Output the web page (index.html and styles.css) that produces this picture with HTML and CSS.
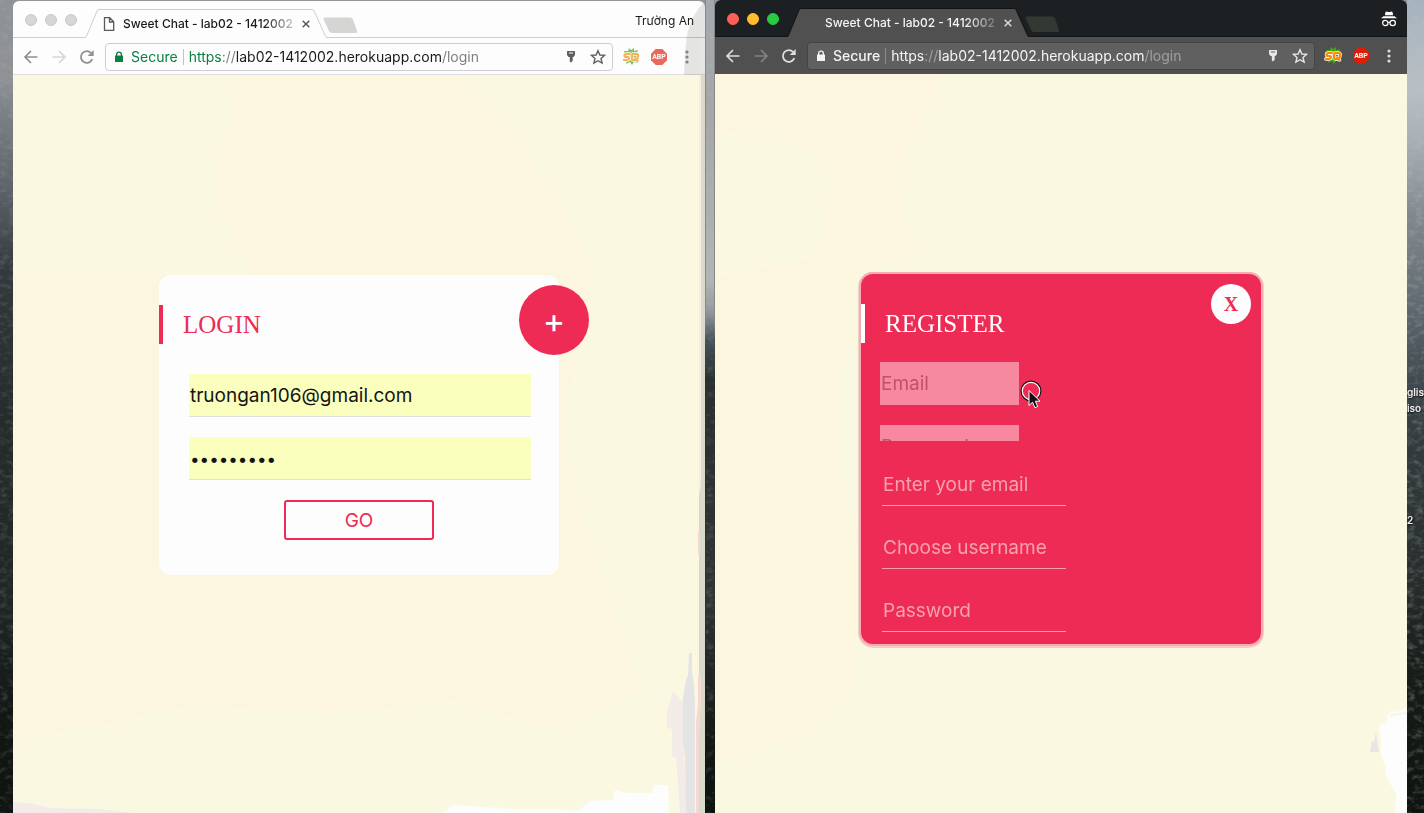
FILE: index.html
```html
<!DOCTYPE html>
<html lang="en">
<head>
<meta charset="utf-8">
<title>Sweet Chat - lab02 - 1412002</title>
<link rel="stylesheet" href="styles.css">
</head>
<body>
<svg class="defs" width="0" height="0" aria-hidden="true">
  <defs>
    <filter id="forest" x="0" y="0" width="100%" height="100%">
      <feTurbulence type="fractalNoise" baseFrequency="0.12 0.2" numOctaves="3" seed="4"/>
      <feColorMatrix values="0 0 0 0 0.5  0 0 0 0 0.55  0 0 0 0 0.58  1.6 0 0 0 -0.75"/>
    </filter>
    <symbol id="back" viewBox="0 0 16 16"><path d="M14.5 8H2M8 2L2 8l6 6" fill="none" stroke="currentColor" stroke-width="1.7"/></symbol>
    <symbol id="forward" viewBox="0 0 16 16"><path d="M1.500 8H14M8 2l6 6-6 6" fill="none" stroke="currentColor" stroke-width="1.7"/></symbol>
    <symbol id="reload" viewBox="0 0 16 16"><path d="M13.300 10.200A5.900 5.900 0 1 1 12.200 4" fill="none" stroke="currentColor" stroke-width="1.800"/><path d="M14.700 1v6H8.700z" fill="currentColor"/></symbol>
    <symbol id="lock" viewBox="0 0 10 12"><path d="M2.600 5V3.500a2.400 2.400 0 0 1 4.800 0V5" fill="none" stroke="currentColor" stroke-width="1.300"/><rect x="1" y="4.500" width="8" height="6.500" rx=".6" fill="currentColor"/></symbol>
    <symbol id="key" viewBox="0 0 10 14"><path d="M1.500 1h7q.5 0 .5.500v3.500L7.500 7H6.700v3.800L5 12.500 3.800 11.600V7H2.500L1 5V1.500q0-.5.5-.5z" fill="currentColor"/><path d="M3 3h4" stroke="var(--field)" stroke-width="1.200"/></symbol>
    <symbol id="star" viewBox="0 0 16 16"><path d="M8 1.700l1.900 4.300 4.600.4-3.500 3.100 1.100 4.600L8 11.700l-4.100 2.400L5 9.500 1.500 6.400l4.600-.4z" fill="none" stroke="currentColor" stroke-width="1.400"/></symbol>
    <symbol id="dots" viewBox="0 0 4 14"><circle cx="2" cy="2" r="1.600" fill="currentColor"/><circle cx="2" cy="7" r="1.600" fill="currentColor"/><circle cx="2" cy="12" r="1.600" fill="currentColor"/></symbol>
    <symbol id="cross" viewBox="0 0 8 8"><path d="M.7.7l6.600 6.600M7.300.7L.7 7.300" stroke="currentColor" stroke-width="1.400"/></symbol>
    <symbol id="tab" viewBox="0 0 242 29"><path class="tab-fill" d="M0 29q1-.5 1.500-1.500L12 2q.6-1.500 2-1.500h213q1.500 0 2.200 1.500L240.500 27.500q.5 1 1.500 1.500z"/><path class="tab-line" d="M0 28.500q1-.2 1.500-1.200L12 2q.6-1.500 2-1.500h213q1.500 0 2.200 1.500L240.500 27.300q.5 1 1.500 1.200"/></symbol>
    <symbol id="newtab" viewBox="0 0 34 17"><path d="M2 .5h25q2 0 3 2l4 11.500q.4 2-1.500 2H9q-2 0-3-2L.7 2.500Q.3.500 2 .5z" fill="currentColor"/></symbol>
    <symbol id="sq" viewBox="0 0 18 18"><path d="M2 3l4 0 1-3 2 2 3-2 0 3 4-1-1 3 2 3-1 3 0 4-4-1-2 3-2-3-4 2 1-4-4 0 2-4z" fill="#3fa712"/><g fill="none" stroke-linecap="round" stroke-linejoin="round"><g stroke="#fff" stroke-width="3.500"><path d="M8 6H4.500q-2 0-2 1.500t2 1.500h1q1.800 0 1.300 1.700Q6.500 12 5 12H1.800"/><path d="M11 6h3.500q2 0 1.600 2l-.4 2q-.4 2-2.200 2h-2q-2 0-1.600-2l.4-2Q9.700 6 11 6zM13 11l2.500 2"/></g><g stroke="#fc8704" stroke-width="2.200"><path d="M8 6H4.500q-2 0-2 1.500t2 1.500h1q1.800 0 1.300 1.700Q6.500 12 5 12H1.800"/><path d="M11 6h3.500q2 0 1.600 2l-.4 2q-.4 2-2.200 2h-2q-2 0-1.600-2l.4-2Q9.700 6 11 6zM13 11l2.500 2"/></g></g></symbol>
    <symbol id="octagon" viewBox="0 0 16 16"><path d="M4.700 0h6.600L16 4.700v6.600L11.300 16H4.700L0 11.300V4.700z" fill="#e11b04"/></symbol>
  </defs>
</svg>

<main class="desktop">
  <div class="wallpaper wallpaper-left"><svg class="grain" aria-hidden="true"><rect width="100%" height="100%" filter="url(#forest)"/></svg></div>

  <section class="window light" aria-label="Browser window, login">
    <header class="strip">
      <div class="lights"><button aria-label="Close window"></button><button aria-label="Minimize window"></button><button aria-label="Zoom window"></button></div>
      <div class="tab">
        <svg class="tab-shape" aria-hidden="true"><use href="#tab"/></svg>
        <svg class="favicon" viewBox="0 0 12 14" aria-hidden="true"><path d="M1.500.7h5.200l4 4v8.600H1.500zM6.500.7V5h4.200" fill="none" stroke="#5a5a5a" stroke-width="1.300"/></svg>
        <span class="tab-title">Sweet Chat - lab02 - 1412002</span>
        <button class="tab-close" aria-label="Close tab"><svg width="8" height="8"><use href="#cross"/></svg></button>
      </div>
      <button class="new-tab" aria-label="New tab"><svg width="34" height="17"><use href="#newtab"/></svg></button>
      <span class="profile">Trường An</span>
    </header>
    <nav class="toolbar">
      <button class="tool" aria-label="Back"><svg width="16" height="16"><use href="#back"/></svg></button>
      <button class="tool faint" aria-label="Forward"><svg width="16" height="16"><use href="#forward"/></svg></button>
      <button class="tool" aria-label="Reload"><svg width="16" height="16"><use href="#reload"/></svg></button>
      <div class="address">
        <svg class="lock" width="10" height="12"><use href="#lock"/></svg>
        <span class="secure">Secure</span>
        <span class="url"><span class="scheme">https</span><span class="dim">://</span>lab02-1412002.herokuapp.com<span class="dim">/login</span></span>
        <button class="mini" aria-label="Saved passwords"><svg width="10" height="14"><use href="#key"/></svg></button>
        <button class="mini" aria-label="Bookmark"><svg width="16" height="16"><use href="#star"/></svg></button>
      </div>
      <button class="tool ext" aria-label="SQ"><svg width="18" height="18"><use href="#sq"/></svg></button>
      <button class="tool ext abp"><svg width="16" height="16" aria-hidden="true"><use href="#octagon"/></svg><span>ABP</span></button>
      <button class="tool" aria-label="Menu"><svg width="4" height="14"><use href="#dots"/></svg></button>
    </nav>
    <svg class="corner" width="22" height="74" viewBox="0 0 22 74" aria-hidden="true"><path d="M22 0Q8 14 4 34L2 50 1 74h21z" fill="#e6e6e5"/><path d="M22 26l-5 10v38h5z" fill="#e8e8e8"/></svg>
    <div class="page">
      <svg class="scenery" width="692" height="738" viewBox="0 0 692 738" aria-hidden="true">
        <path d="M0 0h225l-25 120 40 80H0zM450 0h242v738H0V665l90-15 90-20 140 10 120-15 100 30 90-40-30-80-30-90-20-90 30-160-40-80z" fill="#fbf8e1"/>
        <path d="M686 0h6v738h-6V220z" fill="#f9ebda"/><path d="M688 0h4v738h-6V420l2-10z" fill="#d9d9cc"/>
        <path d="M685 455h2v24h-2zM685 600h3v30l-2 40v68h-3v-90l2-20z" fill="#f5d8cf"/>
        <path d="M660 617l4 3 6 8 1 54 3 56h-7l-2-30-2-26h-4v-28l-5-1v-16z" fill="#f3ebe8"/>
        <path d="M676 578h3v20l2 10 1 24v106h-9l-1-56-2-14v-46l3-17 2-5z" fill="#e4e4e5"/>
        <path d="M430 738l10-8 60 4 67 1 10-9 23-1 2-10 12 3h26v-8h15l1 28z" fill="#fdfdfd"/>
        <path d="M0 727l15 1 22 5 50 1 35 4H0z" fill="#f3ebe8"/>
      </svg>
      <div class="card login">
        <h1 class="title">LOGIN</h1>
        <button class="plus" aria-label="Register">+</button>
        <form class="login-form">
          <input class="filled" type="email" aria-label="Email" value="truongan106@gmail.com">
          <input class="filled secret" type="password" aria-label="Password" value="secret123">
          <button class="go" type="button">GO</button>
        </form>
      </div>
    </div>
  </section>

  <div class="wallpaper wallpaper-gap"><svg class="grain" aria-hidden="true"><rect width="100%" height="100%" filter="url(#forest)"/></svg></div>

  <section class="window dark" aria-label="Browser window, register">
    <header class="strip">
      <div class="lights"><button class="red" aria-label="Close window"></button><button class="amber" aria-label="Minimize window"></button><button class="green" aria-label="Zoom window"></button></div>
      <div class="tab">
        <svg class="tab-shape" aria-hidden="true"><use href="#tab"/></svg>
        <span class="favicon"></span>
        <span class="tab-title">Sweet Chat - lab02 - 1412002</span>
        <button class="tab-close" aria-label="Close tab"><svg width="8" height="8"><use href="#cross"/></svg></button>
      </div>
      <button class="new-tab" aria-label="New tab"><svg width="34" height="17"><use href="#newtab"/></svg></button>
      <svg class="incognito" width="16" height="16" viewBox="0 0 16 16" aria-label="Incognito"><path d="M4.500 1q1.500-.8 2.500 0h2q1-.8 2.500 0l.6 3.200H3.900zM2.500 5.300h11L16 7.300H0z" fill="#fff"/><circle cx="4.300" cy="12" r="2.700" fill="none" stroke="#fff" stroke-width="1.200"/><circle cx="11.700" cy="12" r="2.700" fill="none" stroke="#fff" stroke-width="1.200"/><path d="M7 11.500q1-.8 2 0" fill="none" stroke="#fff"/></svg>
    </header>
    <nav class="toolbar">
      <button class="tool" aria-label="Back"><svg width="16" height="16"><use href="#back"/></svg></button>
      <button class="tool faint" aria-label="Forward"><svg width="16" height="16"><use href="#forward"/></svg></button>
      <button class="tool" aria-label="Reload"><svg width="16" height="16"><use href="#reload"/></svg></button>
      <div class="address">
        <svg class="lock" width="10" height="12"><use href="#lock"/></svg>
        <span class="secure">Secure</span>
        <span class="url"><span class="scheme">https</span><span class="dim">://</span>lab02-1412002.herokuapp.com<span class="dim">/login</span></span>
        <button class="mini" aria-label="Saved passwords"><svg width="10" height="14"><use href="#key"/></svg></button>
        <button class="mini" aria-label="Bookmark"><svg width="16" height="16"><use href="#star"/></svg></button>
      </div>
      <button class="tool" aria-label="SQ"><svg width="18" height="18"><use href="#sq"/></svg></button>
      <button class="tool abp"><svg width="16" height="16" aria-hidden="true"><use href="#octagon"/></svg><span>ABP</span></button>
      <button class="tool" aria-label="Menu"><svg width="4" height="14"><use href="#dots"/></svg></button>
    </nav>
    <div class="page">
      <svg class="scenery" width="692" height="739" viewBox="0 0 692 739" aria-hidden="true">
        <path d="M230 0h462v739H0V690l90-30 50-50V480l-20-120 20-160 60-20-20-80zM0 60l60-6 60 40-20 90-100 20z" fill="#fbf8e1"/>
        <path d="M692 633l-10 5-8-1 1 6 17-3v99h-12l1-20-9-14-2-14-4-10v-15l-2-14 8-4 1-8 19-2z" fill="#fdfdfd"/>
        <path d="M661 658l2 14 1 6h-9l2-12 2 2z" fill="#e9e5e6"/>
      </svg>
      <div class="card register">
        <h1 class="title">REGISTER</h1>
        <button class="close" aria-label="Close">X</button>
        <div class="folding">
          <input type="email" aria-label="Login email" placeholder="Email">
          <input type="password" aria-label="Login password" placeholder="Password">
        </div>
        <form class="register-form">
          <input type="email" aria-label="Email" placeholder="Enter your email">
          <input type="text" aria-label="Username" placeholder="Choose username">
          <input type="password" aria-label="Password" placeholder="Password">
        </form>
        <svg class="pointer" width="24" height="30" viewBox="0 0 24 30" aria-hidden="true"><circle cx="11" cy="11" r="9.700" fill="none" stroke="#111" stroke-width="1.500"/><circle cx="11" cy="11" r="8.700" fill="none" stroke="#fff" stroke-width="1.200"/><path d="M9 10.500v15l3.500-3.300 2.400 5.500 2.800-1.200-2.400-5.300h4.700z" fill="#111" stroke="#fff"/></svg>
      </div>
    </div>
  </section>

  <aside class="wallpaper wallpaper-right">
    <svg class="grain" aria-hidden="true"><rect width="100%" height="100%" filter="url(#forest)"/></svg>
    <p class="icon-name first"><span>glis</span><span>iso</span></p>
    <p class="icon-name second">2</p>
  </aside>
</main>
</body>
</html>
```

FILE: styles.css
```css
* { box-sizing: border-box; }

body {
  margin: 0;
  font-family: Inter, "Liberation Sans", sans-serif;
}

button {
  margin: 0;
  padding: 0;
  border: 0;
  background: none;
  color: inherit;
  font: inherit;
}

svg { display: block; flex: none; }
.defs { position: absolute; }

.desktop {
  display: grid;
  grid-template-columns: 13px 1fr 10px 1fr 17px;
  min-height: 100vh;
  overflow: hidden;
  background: #929699;
}

/* Wallpaper seen between the windows */
.wallpaper { position: relative; overflow: hidden; }
.grain { position: absolute; inset: 0; width: 100%; height: 100%; opacity: .5; }
.wallpaper-left { background: linear-gradient(#8d9397, #8d9194 80px, #777d81 120px, #5c6267 190px, #33393c 270px, #252c2c 420px, #202725 600px, #121714 720px, #0f1411); }
.wallpaper-gap { background: linear-gradient(#a2aaaf, #a5a5a7 100px, #b2b4b5 280px, #969a9e 310px, #46525a 340px, #29302f 380px, #2f3433 600px, #121714 750px, #0d130f); border: solid #888; border-width: 0 1px; border-image: linear-gradient(#888, #888 300px, transparent 340px) 1; }
.wallpaper-right { background: linear-gradient(#a6b3bd, #b9bfc4 90px, #a8b0b5 140px, #80878c 220px, #636c72 300px, #414a4f 380px, #343b3d 440px, #2a302f 560px, #171c18 680px, #0e130f); }
.wallpaper-gap .grain, .wallpaper-left .grain { opacity: .3; }

.icon-name {
  position: relative;
  display: flex;
  flex-direction: column;
  margin: 0;
  color: #f0f0f0;
  font-size: 10px;
  font-weight: 600;
  line-height: 16px;
  text-shadow: 0 1px 2px #000;
}
.icon-name.first { padding-top: 384px; }
.icon-name.second { padding-top: 96px; }

/* Browser window */
.window {
  --chrome: #fdfdfd;
  --strip: #fdfdfd;
  --line: #cdcdcd;
  --field: #fdfdfd;
  --icon: #8f8f8f;
  --text: #1a1a1a;
  position: relative;
  display: flex;
  flex-direction: column;
  min-width: 0;
  border-radius: 6px 6px 0 0;
  overflow: hidden;
}
.light { margin-top: 1px; }
.dark {
  --chrome: #505050;
  --strip: #1d2023;
  --line: #111315;
  --field: #606060;
  --icon: #dedede;
  --text: #f4f4f4;
}

.strip {
  display: flex;
  height: 37px;
  padding: 0 11px 0 12px;
  background: var(--strip);
  box-shadow: inset 0 -1px var(--line);
  color: var(--text);
}
.lights { display: flex; gap: 8px; width: 60px; padding-top: 13px; }
.lights button { width: 12px; height: 12px; border-radius: 50%; background: #d6d6d4; border: 1px solid #c8c8c6; }
.lights .red { background: #ff5f57; border-color: #ff5f57; }
.lights .amber { background: #ffbd2e; border-color: #ffbd2e; }
.lights .green { background: #28cb41; border-color: #28cb41; }

.tab {
  position: relative;
  display: flex;
  align-items: center;
  width: 242px;
  height: 29px;
  margin-top: 8px;
  padding-left: 18px;
}
.tab-shape { position: absolute; inset: 0; width: 242px; height: 29px; }
.tab-fill { fill: var(--chrome); }
.tab-line { fill: none; stroke: var(--line); }
.favicon { position: relative; width: 12px; height: 14px; margin-right: 8px; }
.tab-title {
  position: relative;
  width: 176px;
  overflow: hidden;
  font-size: 12px;
  font-weight: 500;
  line-height: 16px;
  white-space: nowrap;
  mask-image: linear-gradient(90deg, #000 140px, transparent 180px);
}
.tab-close { position: relative; margin-left: 3px; color: var(--icon); }
.light .tab-close { color: #555; }
.new-tab { height: 17px; margin: 16px 0 0 -4px; color: #d5d5d3; }
.dark .new-tab { color: #343832; }
.profile { margin: 12px 0 0 auto; font-size: 12px; line-height: 16px; }
.incognito { margin: 11px 0 0 auto; }
.dark .strip { padding-right: 10px; }

.toolbar {
  display: flex;
  align-items: center;
  height: 37px;
  padding: 0 4px;
  background: var(--chrome);
  color: var(--icon);
}
.light .toolbar { box-shadow: inset 0 -1px #dedee2; }
.tool { display: grid; place-items: center; flex: none; width: 28px; height: 28px; }
.faint { opacity: .35; }
.ext { opacity: .65; }
.abp > * { grid-area: 1 / 1; }
.abp span { position: relative; color: #fff; font: bold 7px/16px Roboto, sans-serif; }

.address {
  display: flex;
  align-items: center;
  flex: 1;
  min-width: 0;
  height: 28px;
  margin: 0 4px;
  padding: 0 5px 0 8px;
  border: 1px solid #cfcfcf;
  border-radius: 4px;
  background: var(--field);
  color: var(--text);
  font-size: 14px;
  line-height: 20px;
  white-space: nowrap;
}
.dark .address { border-color: #444; }
.light .lock, .light .secure, .light .scheme { color: #0b8043; }
.secure { margin-left: 7px; padding-right: 5px; border-right: 1px solid #c4c4c4; line-height: 16px; }
.dark .secure { border-color: #8a8a8a; font-weight: 500; }
.url { flex: 1; min-width: 0; margin-left: 5px; overflow: hidden; }
.dim { color: #808080; }
.dark .dim { color: #a0a0a0; }
.mini { display: grid; place-items: center; width: 18px; height: 24px; margin-left: 9px; color: #5f5f5f; }
.dark .mini { color: #e6e6e6; }
.corner { position: absolute; top: 0; right: 0; pointer-events: none; mix-blend-mode: multiply; }

/* Web page */
.page {
  position: relative;
  display: flex;
  justify-content: center;
  align-items: flex-start;
  flex: 1;
  padding: 200px 20px 40px;
  overflow: hidden;
  background: #fdf6df;
}
.scenery { position: absolute; right: 0; bottom: 0; }
.card {
  position: relative;
  width: 400px;
  border-radius: 12px;
}
.title {
  margin: 0;
  padding-left: 20px;
  border-left: 4px solid;
  font: 25px/39px "Liberation Serif", serif;
}
.card input {
  display: block;
  height: 43px;
  border: 0;
  border-radius: 0;
  outline: 0;
  font: 19px/24px Inter, "Liberation Sans", sans-serif;
}

.login { padding: 30px 0 35px; background: #fdfdfd; color: #ee2b55; }
.login-form { display: flex; flex-direction: column; gap: 20px; padding-top: 30px; }
.login-form input { margin: 0 28px 0 30px; padding: 1px 1px 0; border-bottom: 1px solid #dfe0e0; background: #faffbd; color: #141414; }
.login-form .secret { font-size: 17px; }
.go { align-self: center; width: 150px; height: 40px; border: 2px solid #ee2b55; border-radius: 3px; font-size: 19px; }
.plus {
  position: absolute;
  top: 10px;
  right: -30px;
  width: 70px;
  height: 70px;
  border-radius: 50%;
  background: #ee2b55;
  color: #fff;
  font-size: 34px;
}

.register {
  padding: 30px 0 12px;
  background: #ee2b55;
  color: #fff;
  box-shadow: 0 0 0 2px #f5acb3, 0 1px 0 3px #f3cfc8;
}
.close {
  position: absolute;
  top: 10px;
  right: 10px;
  width: 40px;
  height: 40px;
  border-radius: 50%;
  background: #fdfdfd;
  color: #ee2b55;
  font: bold 20px/40px "Liberation Serif", serif;
}
.folding { display: flex; flex-direction: column; gap: 20px; height: 79px; margin: 19px 0 0 19px; overflow: hidden; }
.folding input { flex: none; width: 139px; padding: 0 1px; background: #f6899f; }
.folding input::placeholder { color: #c25168; opacity: 1; }
.register-form { display: flex; flex-direction: column; gap: 20px; padding: 22px 0 0 21px; }
.register-form input { width: 184px; padding: 0 1px; border-bottom: 1px solid #f7a0b0; background: none; }
.register-form input::placeholder { color: #f7a0ad; opacity: 1; }
.pointer { position: absolute; top: 106px; left: 159px; }
```
